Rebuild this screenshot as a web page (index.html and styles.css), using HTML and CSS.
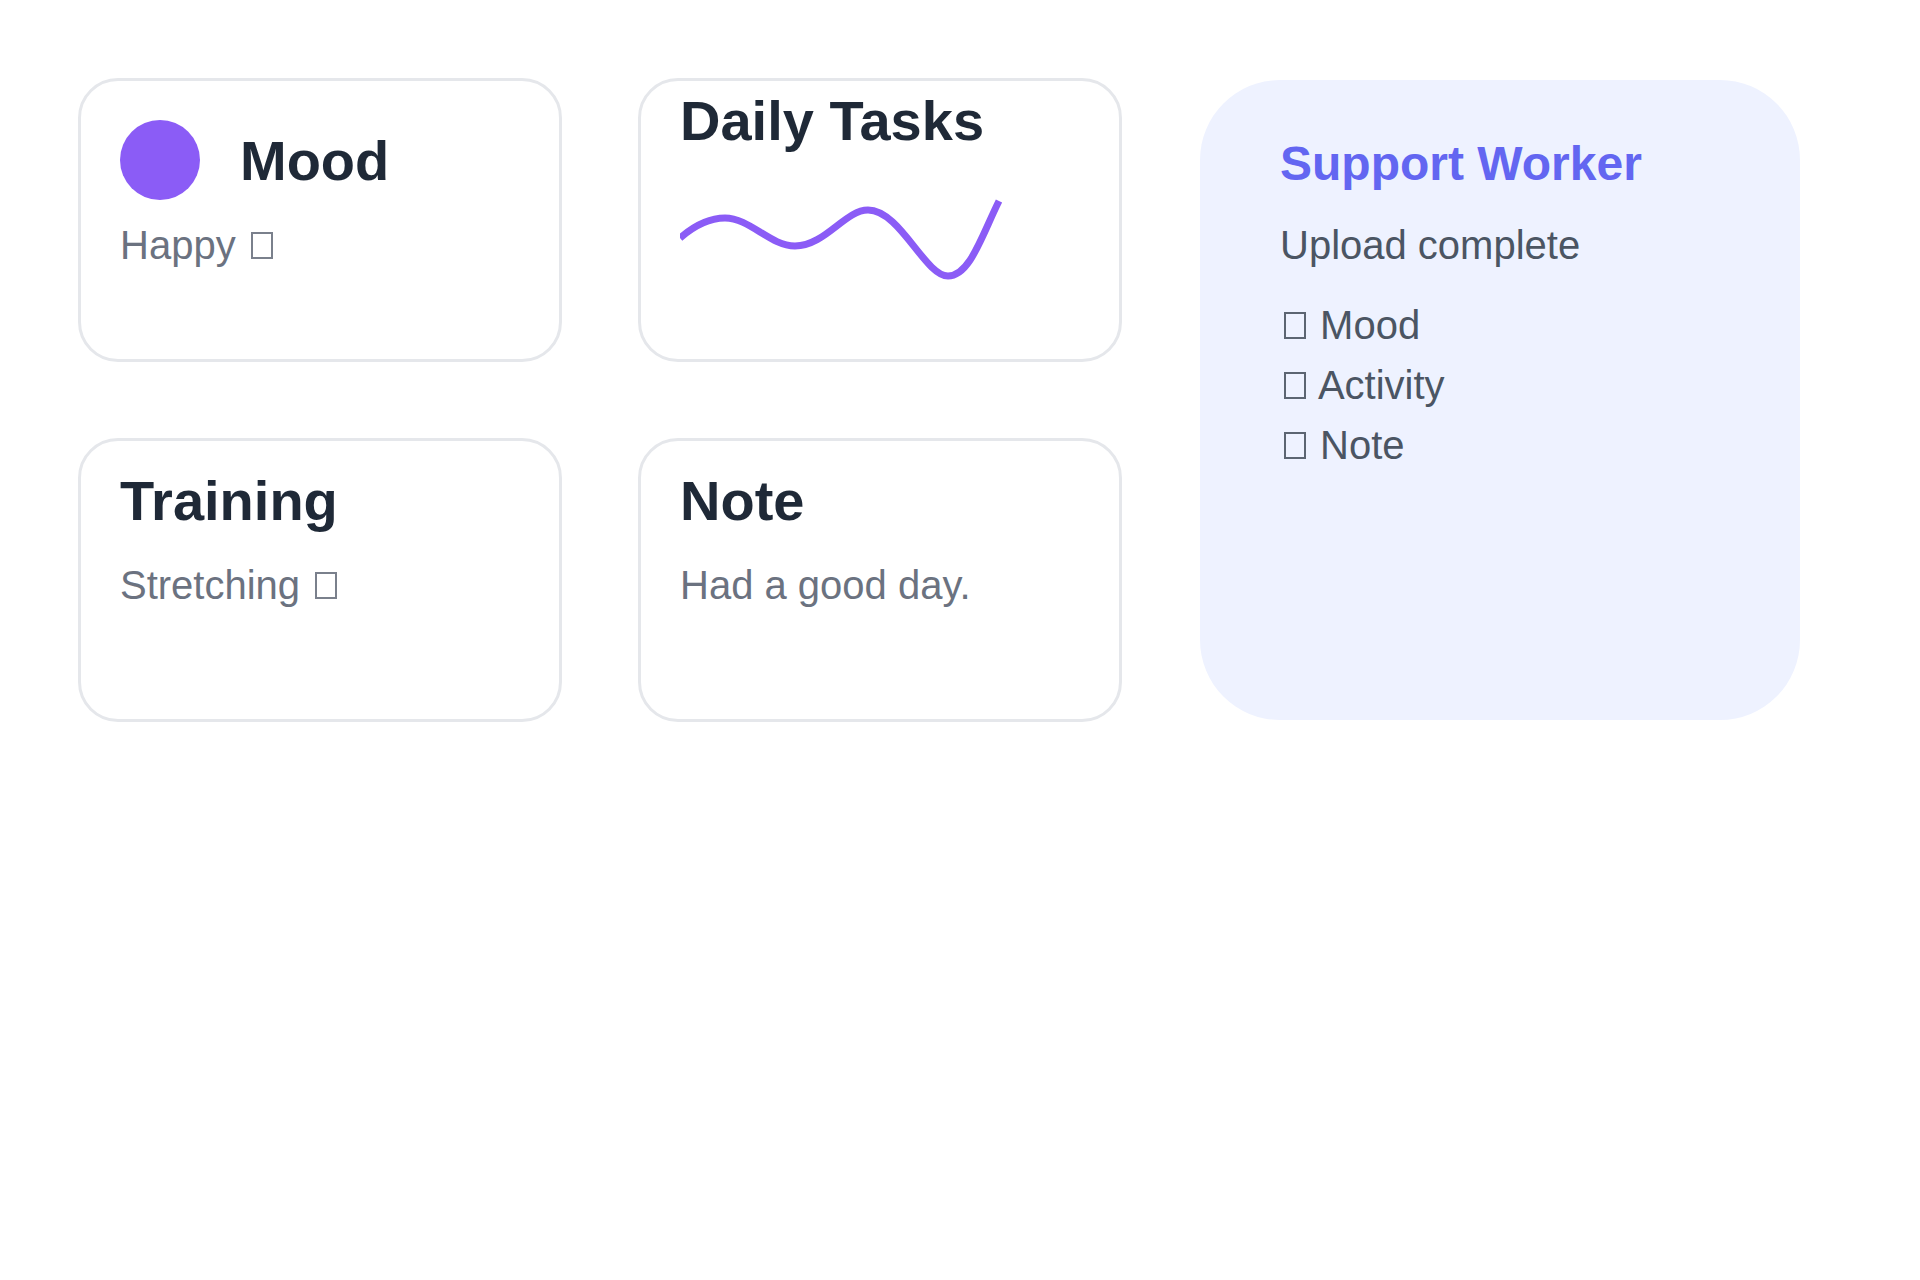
FILE: index.html
```html
<!DOCTYPE html>
<html lang="en">
<head>
<meta charset="utf-8">
<title>Dashboard</title>
<link rel="stylesheet" href="styles.css">
</head>
<body>
<main class="page">
  <section class="grid">
    <div class="card card--mood">
      <div class="mood-row">
        <span class="mood-dot"></span>
        <h2 class="card-title">Mood</h2>
      </div>
      <p class="card-text card-text--mood">Happy <span class="glyph" role="img" aria-label="😊"></span></p>
    </div>
    <div class="card card--tasks">
      <h2 class="card-title">Daily Tasks</h2>
      <svg class="wave" width="330" height="90" viewBox="0 0 330 90" aria-hidden="true">
        <path d="M0 43 C 15 30, 30 23, 45 23 C 70 23, 90 51, 115 51 C 145 51, 165 15, 188 15 C 220 15, 245 81, 268 81 C 290 81, 302 40, 319 6" fill="none" stroke="#8b5cf6" stroke-width="7"/>
      </svg>
    </div>
    <div class="card card--lower">
      <h2 class="card-title">Training</h2>
      <p class="card-text card-text--lower">Stretching <span class="glyph" role="img" aria-label="🧘"></span></p>
    </div>
    <div class="card card--lower">
      <h2 class="card-title">Note</h2>
      <p class="card-text card-text--lower">Had a good day.</p>
    </div>
  </section>
  <aside class="support">
    <h2 class="support-title">Support Worker</h2>
    <p class="support-text">Upload complete</p>
    <ul class="support-list">
      <li><span class="glyph glyph--lead" role="img" aria-label="✅"></span> Mood</li>
      <li><span class="glyph glyph--lead" role="img" aria-label="✅"></span> Activity</li>
      <li><span class="glyph glyph--lead" role="img" aria-label="✅"></span> Note</li>
    </ul>
  </aside>
</main>
</body>
</html>
```

FILE: styles.css
```css
* {
  box-sizing: border-box;
}

html, body {
  margin: 0;
  padding: 0;
  background: #ffffff;
}

body {
  font-family: "Liberation Sans", Arial, sans-serif;
  color: #1f2937;
}

.page {
  display: flex;
  align-items: flex-start;
  padding: 78px 0 0 78px;
}

.grid {
  display: grid;
  grid-template-columns: 484px 484px;
  grid-auto-rows: 284px;
  gap: 76px;
}

.card {
  border: 3px solid #e5e7eb;
  border-radius: 40px;
  padding: 39px;
  background: #ffffff;
}

.card--tasks {
  padding-top: 7px;
}

.card--lower {
  padding-top: 27px;
}

.mood-row {
  display: flex;
  align-items: center;
  gap: 40px;
  height: 80px;
}

.mood-dot {
  width: 80px;
  height: 80px;
  border-radius: 50%;
  background: #8b5cf6;
  flex: none;
}

.card-title {
  margin: 0;
  font-size: 56px;
  font-weight: 700;
  line-height: normal;
  color: #1f2937;
}

.card-text {
  margin: 0;
  font-size: 40px;
  line-height: normal;
  color: #6b7280;
}

.card-text--mood {
  margin-top: 23px;
}

.card-text--lower {
  margin-top: 30px;
}

.glyph {
  display: inline-block;
  width: 22px;
  height: 27px;
  margin: 0 3px 0 4px;
  border: 2px solid currentColor;
  vertical-align: baseline;
  opacity: 0.9;
}

.wave {
  display: block;
  margin-top: 42px;
}

.support {
  margin-left: 78px;
  margin-top: 2px;
  width: 600px;
  height: 640px;
  background: #eef2ff;
  border-radius: 80px;
  padding: 56px 80px;
}

.support-title {
  margin: 0;
  font-size: 48px;
  font-weight: 700;
  line-height: normal;
  color: #6366f1;
}

.support-text {
  margin: 32px 0 0;
  font-size: 40px;
  line-height: normal;
  color: #4b5563;
}

.support-list {
  list-style: none;
  margin: 27px 0 0;
  padding: 0;
  font-size: 40px;
  line-height: 60px;
  color: #4b5563;
}
```
